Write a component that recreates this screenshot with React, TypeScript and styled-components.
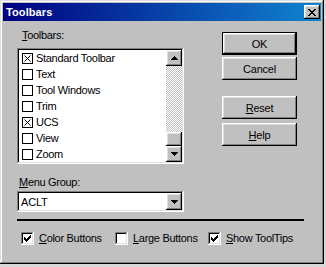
import React from 'react';
import styled, { createGlobalStyle } from 'styled-components';

const GlobalStyle = createGlobalStyle`
  html, body {
    margin: 0;
    padding: 0;
    background: #d8d8d8;
  }
  body {
    font-family: 'Liberation Sans', Arial, sans-serif;
    font-size: 11px;
    color: #000;
  }
`;

const raised = `
  box-shadow: inset -1px -1px #000, inset 1px 1px #fff, inset -2px -2px #808080, inset 2px 2px #dfdfdf;
`;

const sunken = `
  box-shadow: inset -1px -1px #fff, inset 1px 1px #808080, inset -2px -2px #dfdfdf, inset 2px 2px #000;
`;

const Window = styled.div`
  width: 324px;
  height: 264px;
  box-sizing: border-box;
  padding: 3px;
  background: #c0c0c0;
  box-shadow: inset -1px -1px #000, inset 1px 1px #dfdfdf, inset -2px -2px #808080, inset 2px 2px #fff;
  display: flex;
  flex-direction: column;
`;

const TitleBar = styled.div`
  height: 18px;
  display: flex;
  align-items: center;
  justify-content: space-between;
  padding: 0 1px 0 3px;
  background: linear-gradient(90deg, #000080 0%, #1084d0 100%);
`;

const TitleText = styled.span`
  color: #fff;
  font-weight: bold;
  font-size: 11px;
  letter-spacing: 0.1px;
`;

const CloseButton = styled.div`
  width: 16px;
  height: 14px;
  background: #c0c0c0;
  ${raised}
  display: flex;
  align-items: center;
  justify-content: center;
  padding-left: 0;
`;

const Body = styled.div`
  flex: 1;
  display: flex;
  flex-direction: column;
  padding: 8px 0 0 14px;
`;

const TopRow = styled.div`
  display: flex;
`;

const LeftColumn = styled.div`
  width: 167px;
  display: flex;
  flex-direction: column;
`;

const Label = styled.div<{ $indent: number; $top: number; $bottom: number }>`
  height: 13px;
  line-height: 13px;
  padding-left: ${(p) => p.$indent}px;
  margin-top: ${(p) => p.$top}px;
  margin-bottom: ${(p) => p.$bottom}px;
  letter-spacing: -0.3px;
  white-space: nowrap;
`;

const U = styled.span`
  text-decoration: underline;
  text-underline-offset: 1px;
`;

const ListBox = styled.div`
  height: 116px;
  box-sizing: border-box;
  padding: 2px;
  background: #fff;
  ${sunken}
  display: flex;
`;

const Items = styled.div`
  flex: 1;
  display: flex;
  flex-direction: column;
`;

const Item = styled.div`
  height: 16px;
  display: flex;
  align-items: center;
  gap: 3px;
  padding-left: 3px;
  line-height: 16px;
  letter-spacing: -0.3px;
  white-space: nowrap;
`;

const ScrollBar = styled.div`
  width: 16px;
  display: flex;
  flex-direction: column;
`;

const ScrollButton = styled.div<{ $height?: number }>`
  width: 16px;
  height: ${(p) => p.$height ?? 16}px;
  flex-shrink: 0;
  background: #c0c0c0;
  ${raised}
  display: flex;
  align-items: center;
  justify-content: center;
`;

const Track = styled.div`
  flex: 1;
  background: repeating-conic-gradient(#c0c0c0 0 25%, #fff 0 50%) 0 0 / 2px 2px;
`;

const Combo = styled.div`
  height: 21px;
  box-sizing: border-box;
  padding: 2px;
  background: #fff;
  ${sunken}
  display: flex;
  align-items: center;
`;

const ComboText = styled.div`
  flex: 1;
  padding-left: 2px;
  letter-spacing: -0.2px;
`;

const RightColumn = styled.div`
  margin-left: 38px;
  display: flex;
  flex-direction: column;
`;

const Button = styled.div<{ $isDefault?: boolean; $top: number }>`
  width: 75px;
  height: 23px;
  margin-top: ${(p) => p.$top}px;
  background: #c0c0c0;
  box-shadow: ${(p) =>
    p.$isDefault
      ? 'inset 0 0 0 1px #000, inset -2px -2px #000, inset 2px 2px #fff, inset -3px -3px #808080, inset 3px 3px #dfdfdf'
      : 'inset -1px -1px #000, inset 1px 1px #fff, inset -2px -2px #808080, inset 2px 2px #dfdfdf'};
  display: flex;
  align-items: center;
  justify-content: center;
  letter-spacing: -0.2px;
`;

const Separator = styled.div`
  width: 287px;
  height: 2px;
  margin-top: 7px;
  background: #000;
`;

const OptionRow = styled.div`
  display: flex;
  align-items: center;
  margin-top: 11px;
  padding-left: 4px;
`;

const Option = styled.div<{ $width?: number }>`
  display: flex;
  align-items: center;
  gap: 5px;
  width: ${(p) => (p.$width ? `${p.$width}px` : 'auto')};
  line-height: 13px;
  letter-spacing: -0.3px;
  white-space: nowrap;
`;

const CheckBox = styled.div`
  width: 13px;
  height: 13px;
  box-sizing: border-box;
  background: #fff;
  ${sunken}
  display: flex;
  align-items: center;
  justify-content: center;
`;

const Glyph = styled.svg`
  display: block;
`;

const Pixels: React.FC<{ rows: string[] }> = ({ rows }) => (
  <Glyph width={rows[0].length} height={rows.length} shapeRendering="crispEdges">
    {rows.flatMap((row, y) =>
      row.split('').map((c, x) =>
        c === 'X' ? <rect key={`${x}-${y}`} x={x} y={y} width={1} height={1} fill="#000" /> : null
      )
    )}
  </Glyph>
);

const CLOSE = ['XX....XX', '.XX..XX.', '..XXXX..', '...XX...', '..XXXX..', '.XX..XX.', 'XX....XX'];
const UP = ['...X...', '..XXX..', '.XXXXX.', 'XXXXXXX'];
const DOWN = ['XXXXXXX', '.XXXXX.', '..XXX..', '...X...'];
const CHECK = ['......X', '.....XX', 'X...XXX', 'XX.XXX.', 'XXXXX..', '.XXX...', '..X....'];

const ListCheck: React.FC<{ checked: boolean }> = ({ checked }) => (
  <Glyph width={11} height={11} viewBox="0 0 11 11">
    <rect x={0.5} y={0.5} width={10} height={10} fill="#fff" stroke="#000" strokeWidth={1} />
    {checked && <path d="M2.5 2.5 L8.5 8.5 M8.5 2.5 L2.5 8.5" stroke="#000" strokeWidth={1} />}
  </Glyph>
);

const toolbars = [
  { name: 'Standard Toolbar', checked: true },
  { name: 'Text', checked: false },
  { name: 'Tool Windows', checked: false },
  { name: 'Trim', checked: false },
  { name: 'UCS', checked: true },
  { name: 'View', checked: false },
  { name: 'Zoom', checked: false },
];

const App: React.FC = () => (
  <>
    <GlobalStyle />
    <Window>
      <TitleBar>
        <TitleText>Toolbars</TitleText>
        <CloseButton>
          <Pixels rows={CLOSE} />
        </CloseButton>
      </TitleBar>
      <Body>
        <TopRow>
          <LeftColumn>
            <Label $indent={5} $top={0} $bottom={6}>
              <U>T</U>oolbars:
            </Label>
            <ListBox>
              <Items>
                {toolbars.map((t) => (
                  <Item key={t.name}>
                    <ListCheck checked={t.checked} />
                    {t.name}
                  </Item>
                ))}
              </Items>
              <ScrollBar>
                <ScrollButton>
                  <Pixels rows={UP} />
                </ScrollButton>
                <Track />
                <ScrollButton $height={14} />
                <ScrollButton>
                  <Pixels rows={DOWN} />
                </ScrollButton>
              </ScrollBar>
            </ListBox>
            <Label $indent={2} $top={12} $bottom={2}>
              <U>M</U>enu Group:
            </Label>
            <Combo>
              <ComboText>ACLT</ComboText>
              <ScrollButton $height={17}>
                <Pixels rows={DOWN} />
              </ScrollButton>
            </Combo>
          </LeftColumn>
          <RightColumn>
            <Button $isDefault $top={3}>OK</Button>
            <Button $top={2}>Cancel</Button>
            <Button $top={16}>
              <span>
                <U>R</U>eset
              </span>
            </Button>
            <Button $top={4}>
              <span>
                <U>H</U>elp
              </span>
            </Button>
          </RightColumn>
        </TopRow>
        <Separator />
        <OptionRow>
          <Option $width={94}>
            <CheckBox>
              <Pixels rows={CHECK} />
            </CheckBox>
            <span>
              <U>C</U>olor Buttons
            </span>
          </Option>
          <Option $width={93}>
            <CheckBox />
            <span>
              <U>L</U>arge Buttons
            </span>
          </Option>
          <Option>
            <CheckBox>
              <Pixels rows={CHECK} />
            </CheckBox>
            <span>
              <U>S</U>how ToolTips
            </span>
          </Option>
        </OptionRow>
      </Body>
    </Window>
  </>
);

export default App;
